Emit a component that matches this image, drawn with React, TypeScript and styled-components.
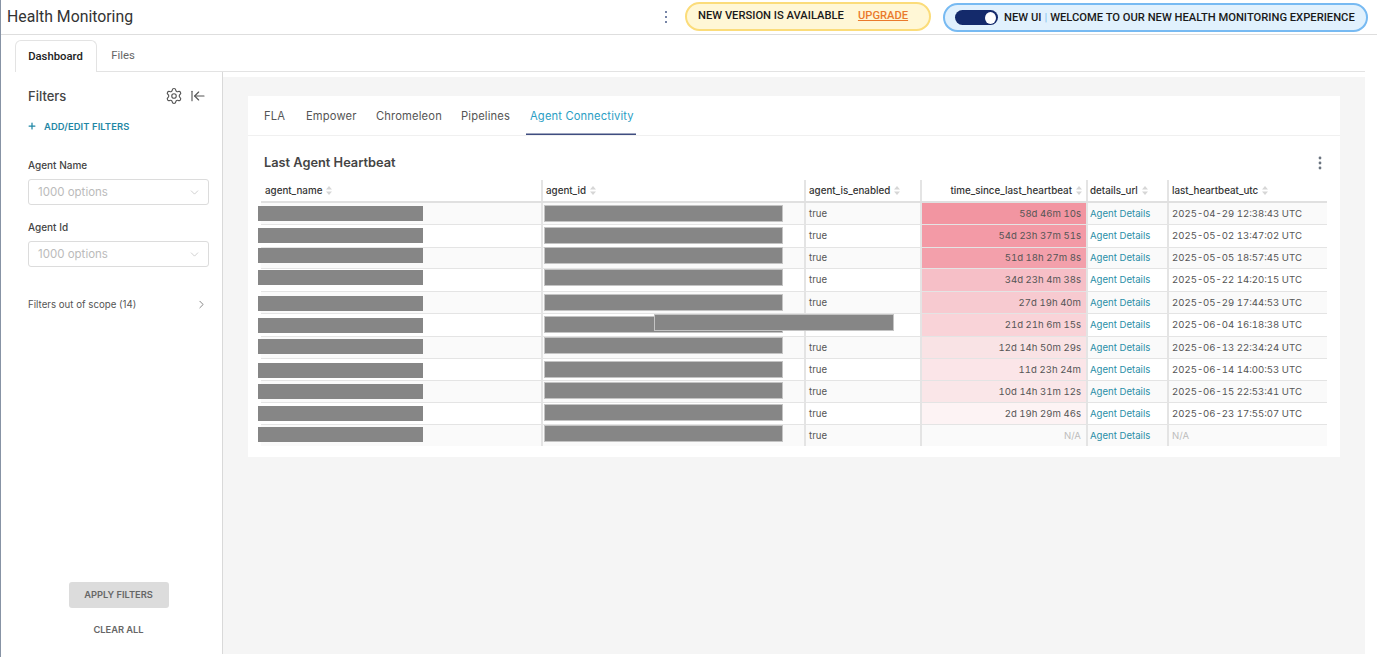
import React from "react";
import styled, { createGlobalStyle } from "styled-components";
import { Settings, ArrowLeftToLine, Plus, ChevronDown, ChevronRight } from "lucide-react";

const Global = createGlobalStyle`
  html, body { margin: 0; padding: 0; background: #fff; }
  body { font-family: Inter, "Liberation Sans", sans-serif; color: #333; overflow: hidden; }
  * { box-sizing: border-box; }
`;

const Shell = styled.div`
  width: 1377px;
  height: 657px;
  border-left: 1px solid #8793a5;
  display: flex;
  flex-direction: column;
  background: #fff;
`;

const Header = styled.header`
  height: 35px;
  border-bottom: 1px solid #dedede;
  display: flex;
  align-items: center;
  padding: 0 9px 0 6px;
`;

const AppTitle = styled.h1`
  margin: 0 auto 1px 0;
  font: 400 15.8px Roboto, sans-serif;
  color: #333;
`;

const HeaderMenu = styled.svg`
  width: 4px;
  height: 14px;
  margin-right: 17px;
  margin-bottom: 1px;
`;

const Pill = styled.div<{ $blue?: boolean }>`
  height: 29px;
  border-radius: 15px;
  display: flex;
  align-items: center;
  font: 500 11.2px Roboto, sans-serif;
  color: #1a1a1a;
  white-space: nowrap;
  padding-bottom: 1px;
  ${(p) =>
    p.$blue
      ? `background:#e1f1fd;border:2px solid #77baf2;width:425px;padding-left:10px;margin:1px 0 0 12px;`
      : `background:#fff7d6;border:2px solid #fbdc7a;width:246px;padding-left:11px;margin-bottom:2px;`}
`;

const UpgradeLink = styled.a`
  color: #ea7a2c;
  text-decoration: underline;
  margin-left: 14px;
`;

const Toggle = styled.span`
  width: 43px;
  height: 15px;
  border-radius: 8px;
  background: #142a6b;
  display: flex;
  align-items: center;
  justify-content: flex-end;
  padding-right: 2px;
  margin-right: 6px;
  margin-top: 1px;
  &::after {
    content: "";
    width: 11px;
    height: 12px;
    border-radius: 50%;
    background: #fff;
  }
`;

const PipeSep = styled.span`
  color: #8fc4ef;
  margin: 0 3px;
`;

const TabBar = styled.nav`
  height: 37px;
  margin: 0 12px 0 14px;
  padding-top: 5px;
  border-bottom: 1px solid #e3e3e3;
  display: flex;
  align-items: stretch;
`;

const PageTab = styled.div<{ $active?: boolean }>`
  font: 500 11.3px Roboto, sans-serif;
  display: flex;
  align-items: center;
  justify-content: center;
  padding: 0 1px 1px 0;
  ${(p) =>
    p.$active
      ? `width:82px;height:32px;color:#222;border:1px solid #e3e3e3;border-bottom:none;border-radius:6px 6px 0 0;background:#fff;`
      : `width:53px;height:31px;color:#666;font-weight:400;`}
`;

const Body = styled.div`
  flex: 1;
  display: flex;
  padding-right: 12px;
  padding-bottom: 3px;
  min-height: 0;
`;

const Sidebar = styled.aside`
  width: 222px;
  border-right: 1px solid #d9d9d9;
  padding: 0 13px 0 27px;
  display: flex;
  flex-direction: column;
  flex: none;
`;

const SideHead = styled.div`
  display: flex;
  align-items: center;
  height: 20px;
  margin-top: 14px;
  padding-right: 2px;
  color: #444;
`;

const SideTitle = styled.div`
  font-size: 13px;
  font-weight: 500;
  color: #444;
  margin-right: auto;
`;

const CollapseIcon = styled(ArrowLeftToLine)`
  margin: 0 1px 0 7px;
`;

const AddFilters = styled.div`
  display: flex;
  align-items: center;
  margin-top: 12px;
  height: 16px;
  font-size: 9.4px;
  font-weight: 600;
  color: #1f87a5;
  letter-spacing: 0.1px;
  gap: 7px;
`;

const AddIcon = styled(Plus)`
  margin-left: -1px;
`;

const FieldLabel = styled.div<{ $first?: boolean }>`
  font-size: 10px;
  font-weight: 500;
  color: #444;
  margin-top: ${(p) => (p.$first ? "24px" : "15px")};
  margin-bottom: 7px;
  line-height: 14px;
`;

const SelectBox = styled.div`
  height: 26px;
  border: 1px solid #dcdcdc;
  border-radius: 3px;
  display: flex;
  align-items: center;
  justify-content: space-between;
  padding: 0 7px 0 9px;
  font-size: 11.5px;
  color: #bbb;
`;

const ScopeRow = styled.div`
  display: flex;
  align-items: center;
  justify-content: space-between;
  margin-top: 29px;
  padding-right: 1px;
  font-size: 9.7px;
  color: #555;
  height: 16px;
`;

const SideFooter = styled.div`
  margin-top: auto;
  display: flex;
  flex-direction: column;
  align-items: center;
  padding-bottom: 18px;
`;

const ApplyButton = styled.div`
  width: 100px;
  height: 26px;
  background: #dcdcdc;
  border-radius: 3px;
  padding-bottom: 1px;
  font-size: 9.3px;
  font-weight: 600;
  color: #666;
  display: flex;
  align-items: center;
  justify-content: center;
`;

const ClearAll = styled.div`
  font-size: 9.3px;
  font-weight: 600;
  color: #666;
  margin-top: 16px;
  line-height: 12px;
`;

const Main = styled.main`
  flex: 1;
  background: #f5f5f5;
  margin-top: 5px;
  padding: 19px 25px 0 25px;
`;

const Panel = styled.section`
  background: #fff;
  height: 361px;
  display: flex;
  flex-direction: column;
`;

const ChartTabs = styled.div`
  height: 40px;
  border-bottom: 1px solid #f0f0f0;
  display: flex;
  padding-left: 12px;
`;

const ChartTab = styled.div<{ $active?: boolean; $w: number }>`
  width: ${(p) => p.$w}px;
  font-size: 11.2px;
  letter-spacing: 0.15px;
  color: ${(p) => (p.$active ? "#2a9ec4" : "#555")};
  display: flex;
  align-items: center;
  padding-left: 4px;
  padding-top: 1px;
  ${(p) => (p.$active ? "box-shadow: inset 0 -1.5px 0 #3f4d80;" : "")}
`;

const ChartHead = styled.div`
  display: flex;
  align-items: center;
  justify-content: space-between;
  padding: 9px 18px 0 16px;
  height: 44px;
`;

const ChartTitle = styled.h2`
  margin: 0;
  font-size: 12.8px;
  font-weight: 600;
  color: #444;
`;

const KebabIcon = styled.svg`
  width: 4px;
  height: 14px;
`;

const Table = styled.div`
  margin: 0 13px;
  width: 1066px;
`;

const Row = styled.div<{ $h: number; $zebra?: boolean; $head?: boolean }>`
  display: grid;
  grid-template-columns: 280px 263px 116px 166px 81px 160px;
  height: ${(p) => p.$h}px;
  background: ${(p) => (p.$zebra ? "#fafafa" : "#fff")};
  border-bottom: ${(p) => (p.$head ? "2px solid #e0e0e0" : "1px solid #e4e4e4")};
  &:last-child { border-bottom: none; }
`;

const HeadCell = styled.div<{ $right?: boolean; $first?: boolean; $tight?: boolean }>`
  display: flex;
  align-items: center;
  justify-content: ${(p) => (p.$right ? "flex-end" : "flex-start")};
  gap: 4px;
  font-size: 9.8px;
  font-weight: 500;
  color: #333;
  padding: 0 4px 0 ${(p) => (p.$first ? "4px" : p.$tight ? "2px" : "3px")};
  border-left: ${(p) => (p.$first ? "none" : "2px solid #e4e4e4")};
`;

const Cell = styled.div<{ $first?: boolean; $heat?: string; $right?: boolean; $link?: boolean; $muted?: boolean }>`
  position: relative;
  display: flex;
  align-items: center;
  justify-content: ${(p) => (p.$right ? "flex-end" : "flex-start")};
  font-size: 9.6px;
  font-variant-numeric: tabular-nums;
  color: ${(p) => (p.$link ? "#2b8fa8" : p.$muted ? "#bdbdbd" : "#555")};
  padding: 0 5px 1px ${(p) => (p.$link ? "2px" : "3px")};
  border-left: ${(p) => (p.$first ? "none" : "2px solid #e4e4e4")};
  background: ${(p) => p.$heat || "transparent"};
  white-space: nowrap;
`;

const Redaction = styled.div<{ $top: number; $left: number; $w: number; $edge?: boolean }>`
  position: absolute;
  top: ${(p) => p.$top}px;
  left: ${(p) => p.$left}px;
  width: ${(p) => p.$w}px;
  height: 15px;
  background: #868686;
  z-index: 2;
  ${(p) => (p.$edge ? "outline: 1px solid #c4c4c4;" : "")}
`;

const columns = [
  { label: "agent_name" },
  { label: "agent_id" },
  { label: "agent_is_enabled" },
  { label: "time_since_last_heartbeat", right: true },
  { label: "details_url", tight: true },
  { label: "last_heartbeat_utc" },
];

const rows = [
  { h: 22, n: 3, i: 3, t: "58d 46m 10s", d: "2025-04-29 12:38:43 UTC", c: "#f295a1" },
  { h: 23, n: 3, i: 3, t: "54d 23h 37m 51s", d: "2025-05-02 13:47:02 UTC", c: "#f39aa6" },
  { h: 21, n: 0, i: 0, t: "51d 18h 27m 8s", d: "2025-05-05 18:57:45 UTC", c: "#f3a0ab" },
  { h: 23, n: 1, i: 1, t: "34d 23h 4m 38s", d: "2025-05-22 14:20:15 UTC", c: "#f6bfc7" },
  { h: 22, n: 4, i: 3, t: "27d 19h 40m", d: "2025-05-29 17:44:53 UTC", c: "#f7cad0" },
  { h: 23, n: 4, i: 3, t: "21d 21h 6m 15s", d: "2025-06-04 16:18:38 UTC", c: "#f9d3d8" },
  { h: 22, n: 2, i: 1, t: "12d 14h 50m 29s", d: "2025-06-13 22:34:24 UTC", c: "#f9e3e5" },
  { h: 22, n: 4, i: 3, t: "11d 23h 24m", d: "2025-06-14 14:00:53 UTC", c: "#fbe5e8" },
  { h: 22, n: 3, i: 2, t: "10d 14h 31m 12s", d: "2025-06-15 22:53:41 UTC", c: "#fae6e8" },
  { h: 22, n: 3, i: 2, t: "2d 19h 29m 46s", d: "2025-06-23 17:55:07 UTC", c: "#fdf3f4" },
  { h: 21, n: 2, i: 1, t: "N/A", d: "N/A", c: "" },
];

const SortIcon = () => (
  <svg width="6" height="9" viewBox="0 0 6 9" fill="#d6d6d6">
    <path d="M3 0 L6 3.5 H0 Z M3 9 L0 5.5 H6 Z" />
  </svg>
);

const Dots = ({ fill }: { fill: string }) => (
  <>
    <circle cx="2" cy="2" r="1.4" fill={fill} />
    <circle cx="2" cy="7" r="1.4" fill={fill} />
    <circle cx="2" cy="12" r="1.4" fill={fill} />
  </>
);

export default function App() {
  return (
    <>
      <Global />
      <Shell>
        <Header>
          <AppTitle>Health Monitoring</AppTitle>
          <HeaderMenu viewBox="0 0 4 14">
            <circle cx="2" cy="2" r="1" fill="#4a5d8a" />
            <circle cx="2" cy="7" r="1" fill="#4a5d8a" />
            <circle cx="2" cy="12" r="1" fill="#4a5d8a" />
          </HeaderMenu>
          <Pill>
            NEW VERSION IS AVAILABLE
            <UpgradeLink>UPGRADE</UpgradeLink>
          </Pill>
          <Pill $blue>
            <Toggle />
            NEW UI<PipeSep>|</PipeSep>WELCOME TO OUR NEW HEALTH MONITORING EXPERIENCE
          </Pill>
        </Header>
        <TabBar>
          <PageTab $active>Dashboard</PageTab>
          <PageTab>Files</PageTab>
        </TabBar>
        <Body>
          <Sidebar>
            <SideHead>
              <SideTitle>Filters</SideTitle>
              <Settings size={18} strokeWidth={1.5} color="#555" />
              <CollapseIcon size={16} strokeWidth={1.7} color="#555" />
            </SideHead>
            <AddFilters>
              <AddIcon size={10} strokeWidth={3} color="#1f87a5" />
              ADD/EDIT FILTERS
            </AddFilters>
            <FieldLabel $first>Agent Name</FieldLabel>
            <SelectBox>
              1000 options
              <ChevronDown size={13} strokeWidth={1} color="#aaa" />
            </SelectBox>
            <FieldLabel>Agent Id</FieldLabel>
            <SelectBox>
              1000 options
              <ChevronDown size={13} strokeWidth={1} color="#aaa" />
            </SelectBox>
            <ScopeRow>
              Filters out of scope (14)
              <ChevronRight size={13} strokeWidth={1.3} color="#555" />
            </ScopeRow>
            <SideFooter>
              <ApplyButton>APPLY FILTERS</ApplyButton>
              <ClearAll>CLEAR ALL</ClearAll>
            </SideFooter>
          </Sidebar>
          <Main>
            <Panel>
              <ChartTabs>
                <ChartTab $w={42}>FLA</ChartTab>
                <ChartTab $w={70}>Empower</ChartTab>
                <ChartTab $w={85}>Chromeleon</ChartTab>
                <ChartTab $w={69}>Pipelines</ChartTab>
                <ChartTab $w={110} $active>Agent Connectivity</ChartTab>
              </ChartTabs>
              <ChartHead>
                <ChartTitle>Last Agent Heartbeat</ChartTitle>
                <KebabIcon viewBox="0 0 4 14">
                  <Dots fill="#6b7480" />
                </KebabIcon>
              </ChartHead>
              <Table>
                <Row $h={23} $head>
                  {columns.map((c, i) => (
                    <HeadCell key={c.label} $first={i === 0} $right={c.right} $tight={c.tight}>
                      {c.label}
                      <SortIcon />
                    </HeadCell>
                  ))}
                </Row>
                {rows.map((r, i) => (
                  <Row key={r.d + i} $h={r.h} $zebra={i % 2 === 0}>
                    <Cell $first>
                      <Redaction $top={r.n} $left={-3} $w={165} />
                    </Cell>
                    <Cell>
                      <Redaction $top={r.i} $left={2} $w={237} $edge />
                    </Cell>
                    <Cell>
                      true
                      {i === 5 && <Redaction $top={1} $left={-151} $w={238} $edge />}
                    </Cell>
                    <Cell $heat={r.c} $right $muted={r.t === "N/A"}>{r.t}</Cell>
                    <Cell $link>Agent Details</Cell>
                    <Cell $muted={r.d === "N/A"}>{r.d}</Cell>
                  </Row>
                ))}
              </Table>
            </Panel>
          </Main>
        </Body>
      </Shell>
    </>
  );
}
